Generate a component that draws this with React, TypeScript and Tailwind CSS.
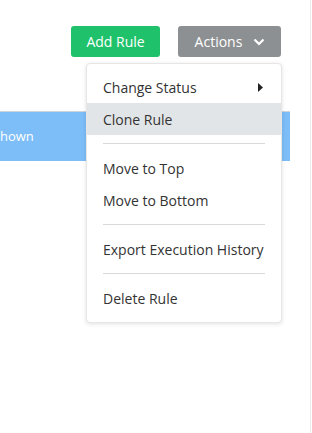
import React from 'react';

const font = { fontFamily: '"Open Sans", "Liberation Sans", sans-serif' };

function MenuItem({ label, active, submenu }: { label: string; active?: boolean; submenu?: boolean }) {
  return (
    <div
      className={`h-8 flex items-center justify-between pl-4 pr-[16px] text-[14px] text-[#333] ${
        active ? 'bg-[#e2e5e8]' : ''
      }`}
    >
      <span>{label}</span>
      {submenu && (
        <svg width="5" height="9" viewBox="0 0 5 9" className="mr-[2px]">
          <path d="M0 0 L5 4.5 L0 9 Z" fill="#222" />
        </svg>
      )}
    </div>
  );
}

function Divider() {
  return <div className="mx-4 my-2 h-px bg-[#d9d9d9]" />;
}

export default function App() {
  return (
    <div className="relative w-[312px] h-[433px] bg-white overflow-hidden flex" style={font}>
      <div className="w-[311px] h-full border-r border-[#ececec]">
        {/* Toolbar */}
        <div className="flex justify-end gap-[18px] pt-[26px] pr-[29px]">
          <button className="w-[89px] h-[31px] rounded-[3px] bg-[#1fc26b] text-white text-[14px]">
            Add Rule
          </button>
          <button className="w-[103px] h-[31px] rounded-[3px] bg-[#8d9092] text-white text-[14px] flex items-center justify-center gap-[11px]">
            <span className="ml-[1px]">Actions</span>
            <svg width="12" height="8" viewBox="0 0 12 8">
              <path d="M1.5 1.5 L6 6 L10.5 1.5" stroke="white" strokeWidth="2.2" fill="none" />
            </svg>
          </button>
        </div>

        {/* Selected row */}
        <div className="mt-[54px] w-[290px] h-[50px] border-t border-[#cfd4d9] bg-[#7dbdf8] flex items-center">
          <span className="text-white text-[13px]">hown</span>
        </div>
      </div>

      {/* Actions dropdown */}
      <div className="absolute left-[86px] top-[63px] w-[196px] pt-[7px] pb-2 bg-white rounded-[4px] border border-[#e6e6e6] shadow-[0_1px_4px_rgba(0,0,0,0.12)]">
        <MenuItem label="Change Status" submenu />
        <MenuItem label="Clone Rule" active />
        <Divider />
        <MenuItem label="Move to Top" />
        <MenuItem label="Move to Bottom" />
        <Divider />
        <MenuItem label="Export Execution History" />
        <Divider />
        <MenuItem label="Delete Rule" />
      </div>
    </div>
  );
}
